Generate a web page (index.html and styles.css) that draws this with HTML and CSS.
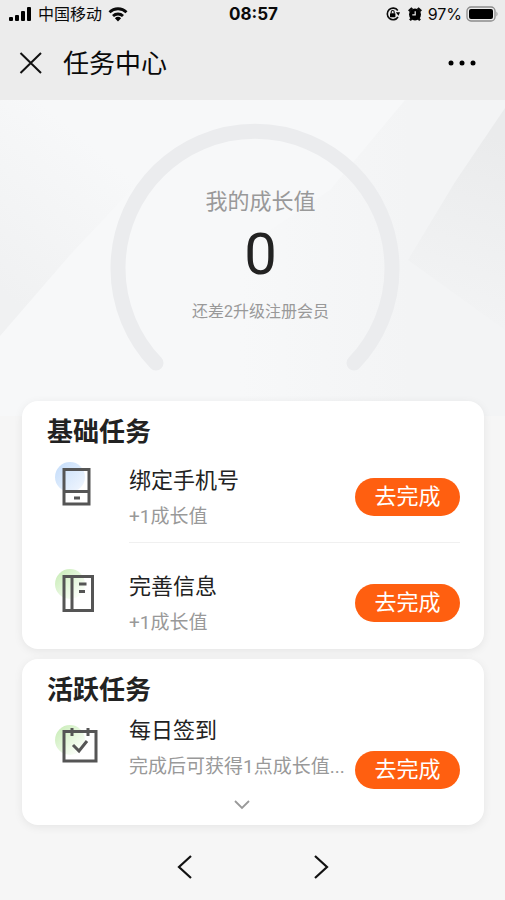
FILE: index.html
```html
<!DOCTYPE html>
<html lang="zh-CN">
<head>
<meta charset="utf-8">
<meta name="viewport" content="width=device-width, initial-scale=1">
<title>任务中心</title>
<link rel="stylesheet" href="styles.css">
</head>
<body>
<header class="top">
  <div class="status">
    <div class="status-side">
      <svg class="signal" width="24" height="16" viewBox="0 0 24 16" aria-hidden="true"><rect x="1" y="11" width="4" height="4" rx="1"/><rect x="7" y="9" width="4" height="6" rx="1"/><rect x="13" y="5" width="4" height="10" rx="1"/><rect x="19" y="1" width="4" height="14" rx="1"/></svg>
      <span class="carrier">中国移动</span>
      <svg class="wifi" width="20" height="16" viewBox="0 0 20 16" aria-hidden="true"><path d="M1.500 6.200a12.200 12.200 0 0 1 17 0M5 10a7.200 7.200 0 0 1 10 0" fill="none" stroke="#0a0a0a" stroke-width="2.800"/><path d="M10 15.500 6.900 12.300a4.500 4.500 0 0 1 6.200 0z"/></svg>
    </div>
    <time class="clock">08:57</time>
    <div class="status-side status-right">
      <svg width="14" height="14" viewBox="0 0 14 14" aria-hidden="true"><path d="M11.800 3.500A5.800 5.800 0 1 0 12 10" fill="none" stroke="#0a0a0a" stroke-width="1.600"/><path d="M9.800 5.300h4.200L12.500 8.700z"/><rect x="4" y="6.200" width="5.400" height="4" rx=".5"/><path d="M5.200 6.500V5a1.500 1.500 0 0 1 3 0v1.500" fill="none" stroke="#0a0a0a" stroke-width="1.100"/></svg>
      <svg class="alarm" width="14" height="14" viewBox="0 0 14 14" aria-hidden="true"><circle cx="7" cy="7.500" r="6"/><path d="M.8 4.200 4.200 1M13.200 4.200 9.800 1M3.500 11.500 2 13.300M10.500 11.500l1.500 1.800" fill="none" stroke="#0a0a0a" stroke-width="2.400"/><path d="M7.200 4.300v3.500H4.300" fill="none" stroke="#ececec" stroke-width="1.200"/></svg>
      <span class="charge">97%</span>
      <svg width="33" height="16" viewBox="0 0 33 16" aria-hidden="true"><rect x="1" y="1" width="28" height="14" rx="4" fill="none" stroke="#8c8c8c" stroke-width="1.300"/><rect x="3" y="3" width="24" height="10" rx="2"/><path d="M30.500 5.500q2 2.500 0 5z" fill="#8c8c8c"/></svg>
    </div>
  </div>
  <div class="titlebar">
    <button class="plain" type="button" aria-label="关闭"><svg width="24" height="24" viewBox="0 0 24 24"><path d="M1.500 2 22 22M22 2 1.500 22" fill="none" stroke="#111" stroke-width="2"/></svg></button>
    <h1 class="title">任务中心</h1>
    <button class="plain" type="button" aria-label="更多"><svg width="32" height="24" viewBox="0 0 32 24"><circle cx="5" cy="12" r="2.500"/><circle cx="16" cy="12" r="2.500"/><circle cx="27" cy="12" r="2.500"/></svg></button>
  </div>
</header>

<main>
  <section class="hero">
    <svg class="facets" viewBox="0 0 505 316" preserveAspectRatio="none" aria-hidden="true">
      <defs>
        <linearGradient id="left" gradientUnits="userSpaceOnUse" x1="0" y1="190" x2="110" y2="60"><stop offset="0" stop-color="#f0f1f2"/><stop offset="1" stop-color="#f7f8f9"/></linearGradient>
        <linearGradient id="mid" gradientUnits="userSpaceOnUse" x1="240" y1="0" x2="410" y2="0"><stop offset="0" stop-color="#f7f8f9"/><stop offset="1" stop-color="#f3f4f5"/></linearGradient>
        <linearGradient id="right" gradientUnits="userSpaceOnUse" x1="505" y1="40" x2="440" y2="230"><stop offset="0" stop-color="#eaebec"/><stop offset="1" stop-color="#f3f4f5"/></linearGradient>
      </defs>
      <path d="M0 0H150V70L70 155 0 236z" fill="url(#left)"/>
      <path d="M405 0H505V316H240V150L330 90z" fill="url(#mid)"/>
      <path d="M505 8 455 82 408 160 505 230z" fill="url(#right)"/>
    </svg>
    <svg class="gauge" width="294" height="260" viewBox="0 0 294 260" aria-hidden="true"><path d="M49 242A137 137 0 1 1 247 242" fill="none" stroke="#ebecee" stroke-width="15" stroke-linecap="round"/></svg>
    <div class="growth">
      <p class="growth-label">我的成长值</p>
      <p class="growth-value">0</p>
      <p class="growth-hint">还差2升级注册会员</p>
    </div>
  </section>

  <div class="cards">
    <section class="card">
      <h2 class="card-title">基础任务</h2>
      <ul class="tasks">
        <li class="task">
          <svg class="task-icon" width="48" height="46" viewBox="0 0 48 46" aria-hidden="true"><defs><linearGradient id="blue" x1="0" y1="0" x2="1" y2="1"><stop offset="0" stop-color="#c3dcfa"/><stop offset="1" stop-color="#f4f8fe"/></linearGradient></defs><circle cx="16" cy="15" r="15" fill="url(#blue)"/><path d="M10 7.500H35V42H10zM10 29.500H35M20 36h6" fill="none" stroke="#555" stroke-width="3"/></svg>
          <div class="task-body">
            <div class="task-text"><h3 class="task-name">绑定手机号</h3><p class="task-note">+1成长值</p></div>
            <button class="go" type="button">去完成</button>
          </div>
        </li>
        <li class="task">
          <svg class="task-icon" width="48" height="46" viewBox="0 0 48 46" aria-hidden="true"><defs><linearGradient id="green" x1="0" y1="0" x2="1" y2="1"><stop offset="0" stop-color="#c5ebb2"/><stop offset=".8" stop-color="#f8fdf5"/></linearGradient></defs><circle cx="16" cy="16" r="15" fill="url(#green)"/><path d="M10 8.500H38.500V42.500H10zM18 8.500v34M25 16h7.500M25 23.500h6" fill="none" stroke="#555" stroke-width="3"/></svg>
          <div class="task-body">
            <div class="task-text"><h3 class="task-name">完善信息</h3><p class="task-note">+1成长值</p></div>
            <button class="go" type="button">去完成</button>
          </div>
        </li>
      </ul>
    </section>

    <section class="card">
      <h2 class="card-title">活跃任务</h2>
      <ul class="tasks">
        <li class="task task-daily">
          <svg class="task-icon" width="48" height="46" viewBox="0 0 48 46" aria-hidden="true"><circle cx="16" cy="16" r="15" fill="url(#green)"/><path d="M10 7.500H42V37H10zM18 4v8M34 4v8M19 21l6 6 8-10" fill="none" stroke="#555" stroke-width="3"/></svg>
          <div class="task-body">
            <div class="task-text">
              <h3 class="task-name">每日签到</h3><p class="task-note">完成后可获得1点成长值...</p>
              <button class="plain expand" type="button" aria-label="展开"><svg width="18" height="12" viewBox="0 0 18 12"><path d="M2 2l7 7 7-7" fill="none" stroke="#999" stroke-width="1.800"/></svg></button>
            </div>
            <button class="go" type="button">去完成</button>
          </div>
        </li>
      </ul>
    </section>
  </div>
</main>

<nav class="pager" aria-label="浏览">
  <button class="plain" type="button" aria-label="后退"><svg width="16" height="26" viewBox="0 0 16 26"><path d="M14 2 2 13 14 24" fill="none" stroke="#111" stroke-width="2.200"/></svg></button>
  <button class="plain" type="button" aria-label="前进"><svg width="16" height="26" viewBox="0 0 16 26"><path d="M2 2 14 13 2 24" fill="none" stroke="#111" stroke-width="2.200"/></svg></button>
</nav>
</body>
</html>
```

FILE: styles.css
```css
* {
  box-sizing: border-box;
  margin: 0;
  padding: 0;
}

body {
  min-height: 100vh;
  background: #f6f6f6;
  color: #222;
  font-family: Roboto, "Noto Sans CJK SC", sans-serif;
}

svg {
  display: block;
  flex: none;
}

.plain {
  display: flex;
  border: 0;
  background: none;
  cursor: pointer;
}

.top {
  background: #ececec;
  color: #0a0a0a;
}

.status {
  display: grid;
  grid-template-columns: 1fr auto 1fr;
  align-items: center;
  height: 28px;
  padding: 0 6px 0 8px;
  font-family: Inter, "Noto Sans CJK SC", sans-serif;
  font-size: 16px;
  line-height: 28px;
}

.status-side {
  display: flex;
  align-items: center;
  gap: 6px;
}

.status-right {
  justify-content: flex-end;
  gap: 4px;
}

.alarm {
  margin: 0 2px 0 4px;
}

.clock {
  font-size: 17px;
  font-weight: 700;
}

.titlebar {
  display: flex;
  align-items: center;
  gap: 20px;
  height: 72px;
  padding: 0 27px 2px 19px;
}

.title {
  flex: 1;
  padding-top: 2px;
  font-size: 26px;
  font-weight: 400;
  line-height: 34px;
}

.hero {
  position: relative;
  display: grid;
  grid-template-rows: 316px;
  justify-items: center;
  background: #f7f8f9;
}

.facets {
  position: absolute;
  inset: 0;
  width: 100%;
  height: 100%;
}

.gauge,
.growth {
  position: relative;
  grid-area: 1 / 1;
}

.gauge {
  margin: 21px 0 0 3px;
}

.growth {
  padding: 86px 0 0 16px;
  color: #999;
  text-align: center;
}

.growth-label {
  font-size: 22px;
  line-height: 32px;
}

.growth-value {
  color: #222;
  font-size: 58px;
  line-height: 72px;
}

.growth-hint {
  margin-top: 8px;
  font-size: 16px;
  line-height: 28px;
}

.cards {
  position: relative;
  display: grid;
  gap: 10px;
  margin-top: -15px;
  padding: 0 21px 0 22px;
}

.card {
  padding: 13px 24px 0 25px;
  border-radius: 16px;
  background: #fff;
  box-shadow: 0 2px 10px rgba(0, 0, 0, 0.07);
}

.card-title {
  font-size: 26px;
  font-weight: 700;
  line-height: 36px;
}

.tasks {
  list-style: none;
}

.task {
  display: flex;
  align-items: flex-start;
  padding-top: 12px;
}

.task + .task {
  padding-top: 25px;
}

.task-icon {
  margin: 0 27px 0 7px;
}

.task-body {
  display: flex;
  flex: 1;
  align-items: flex-start;
  min-width: 0;
  padding-bottom: 7px;
  border-bottom: 1px solid #f0f0f0;
}

.task:last-child .task-body {
  border-bottom-color: transparent;
}

.task-text {
  flex: 1;
  min-width: 0;
  padding-top: 1px;
}

.task-name {
  font-size: 22px;
  font-weight: 400;
  line-height: 36px;
}

.task-note {
  overflow: hidden;
  color: #999;
  font-size: 19px;
  line-height: 36px;
  white-space: nowrap;
}

.go {
  flex: none;
  width: 105px;
  height: 38px;
  margin-top: 16px;
  border: 0;
  border-radius: 19px;
  background: #ff5f10;
  color: #fff;
  font: inherit;
  font-size: 22px;
  line-height: 36px;
  cursor: pointer;
}

.task-daily {
  padding-top: 4px;
}

.task-daily .task-icon {
  margin-top: 12px;
}

.task-daily .task-body {
  padding-bottom: 0;
}

.task-daily .go {
  margin-top: 39px;
}

.expand {
  justify-content: center;
  width: 100%;
  padding: 14px 0 13px;
}

.pager {
  display: flex;
  justify-content: center;
  gap: 120px;
  padding: 29px 0 20px;
}
```
